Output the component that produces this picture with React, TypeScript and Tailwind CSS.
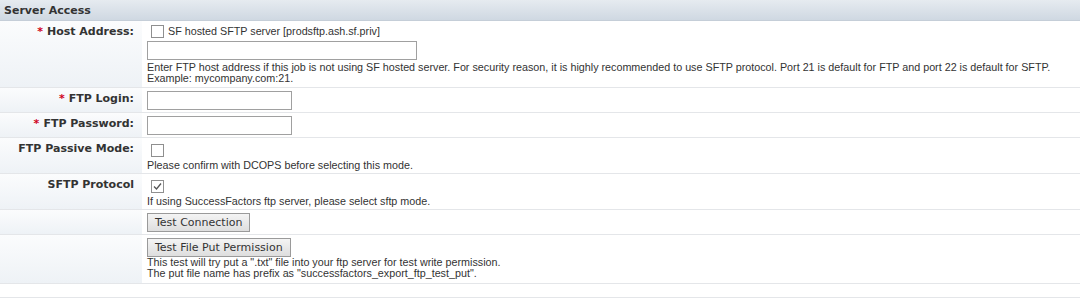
import type { ReactNode } from "react";

const labelFont = { fontFamily: '"DejaVu Sans", Verdana, sans-serif' };

function Box({ checked = false }: { checked?: boolean }) {
  return (
    <span className="flex h-[13px] w-[13px] items-center justify-center border border-[#8f8f8f] bg-white">
      {checked && (
        <svg width="11" height="11" viewBox="0 0 11 11">
          <path d="M2 5.5 L4.5 8 L9 2.5" fill="none" stroke="#555" strokeWidth="1.3" />
        </svg>
      )}
    </span>
  );
}

function Row({
  label,
  required,
  height,
  children,
}: {
  label?: string;
  required?: boolean;
  height: string;
  children: ReactNode;
}) {
  return (
    <div className={`flex border-b border-[#e4e6e9] ${height}`}>
      <div
        className="flex w-[142px] shrink-0 justify-end bg-gradient-to-b from-[#fbfcfd] to-[#eef2f6] pr-[8px] pt-[3px] text-[11px] font-bold leading-[15px] text-[#333]"
        style={labelFont}
      >
        {required && <span className="mr-[4px] text-[#d0021b]">*</span>}
        {label}
      </div>
      <div className="ml-[4px] flex-1 bg-white pl-[1px] pt-[3px]">{children}</div>
    </div>
  );
}

function Btn({ children }: { children: ReactNode }) {
  return (
    <button
      className="h-[19px] border border-[#9a9a9a] bg-gradient-to-b from-[#f4f4f4] to-[#dedede] px-[7px] text-[11px] leading-[15px] text-[#333]"
      style={labelFont}
    >
      {children}
    </button>
  );
}

export default function App() {
  return (
    <div
      className="h-[299px] w-[1080px] overflow-hidden bg-white text-[10.75px] leading-[11px] text-[#333]"
      style={{ fontFamily: '"Liberation Sans", Arial, sans-serif' }}
    >
      <div
        className="flex h-[21px] items-center border-b border-[#c5ced8] bg-gradient-to-b from-[#e6ebf0] to-[#cfd8e2] pl-[4px] text-[11px] font-bold text-[#333]"
        style={labelFont}
      >
        Server Access
      </div>

      <Row label="Host Address:" required height="h-[67px]">
        <div className="flex items-center gap-[4px] pl-[4px] pt-[1px]">
          <Box />
          <span>SF hosted SFTP server [prodsftp.ash.sf.priv]</span>
        </div>
        <input className="mt-[3px] block h-[19px] w-[270px] border border-[#a0a0a0] bg-white" />
        <p className="mt-[2px] leading-[11px]">
          Enter FTP host address if this job is not using SF hosted server. For security reason, it is highly
          recommended to use SFTP protocol. Port 21 is default for FTP and port 22 is default for SFTP.
          <br />
          Example: mycompany.com:21.
        </p>
      </Row>

      <Row label="FTP Login:" required height="h-[25px]">
        <input className="block h-[19px] w-[145px] border border-[#a0a0a0] bg-white" />
      </Row>

      <Row label="FTP Password:" required height="h-[25px]">
        <input type="password" className="block h-[19px] w-[145px] border border-[#a0a0a0] bg-white" />
      </Row>

      <Row label="FTP Passive Mode:" height="h-[36px]">
        <div className="pl-[4px] pt-[3px]">
          <Box />
        </div>
        <p className="mt-[3px]">Please confirm with DCOPS before selecting this mode.</p>
      </Row>

      <Row label="SFTP Protocol" height="h-[36px]">
        <div className="pl-[4px] pt-[3px]">
          <Box checked />
        </div>
        <p className="mt-[3px]">If using SuccessFactors ftp server, please select sftp mode.</p>
      </Row>

      <Row label="" height="h-[25px]">
        <Btn>Test Connection</Btn>
      </Row>

      <Row label="" height="h-[49px]">
        <Btn>Test File Put Permission</Btn>
        <p className="leading-[11px]">
          This test will try put a ".txt" file into your ftp server for test write permission.
          <br />
          The put file name has prefix as "successfactors_export_ftp_test_put".
        </p>
      </Row>

      <div className="mt-[13px] border-b border-[#e4e6e9]" />
    </div>
  );
}
